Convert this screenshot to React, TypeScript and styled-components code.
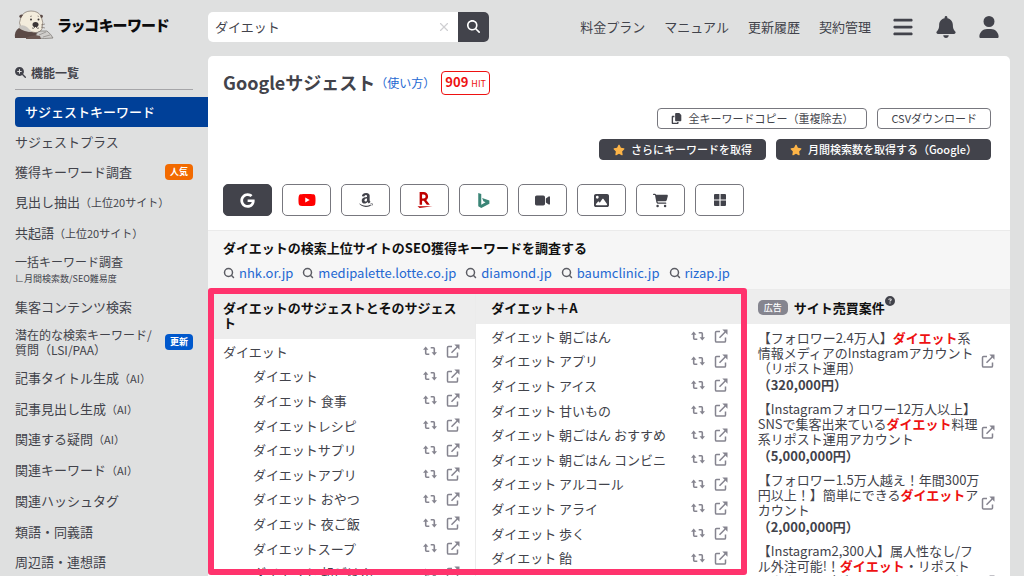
import React from "react";
import styled, { createGlobalStyle } from "styled-components";
import {
  FaAmazon,
  FaBars,
  FaBell,
  FaCartShopping,
  FaCircleQuestion,
  FaCopy,
  FaGoogle,
  FaImage,
  FaMagnifyingGlass,
  FaMagnifyingGlassPlus,
  FaStar,
  FaUser,
  FaVideo,
  FaYoutube,
} from "react-icons/fa6";
import { SiRakuten } from "react-icons/si";
import { Search, X } from "lucide-react";

const ink = "#42434b";
const muted = "#85848f";
const link = "#2468d2";
const red = "#ee1111";

const GlobalStyle = createGlobalStyle`
  * { box-sizing: border-box; }
  body {
    margin: 0;
    background: #dfe0e0;
    color: ${ink};
    font-family: "Noto Sans CJK JP", "Noto Sans", sans-serif;
    font-size: 13px;
    line-height: 15px;
  }
  a { color: inherit; text-decoration: none; }
  ul, h1, h2, p { margin: 0; padding: 0; list-style: none; }
  button, input { font: inherit; color: inherit; }
  button { cursor: pointer; }
`;

const Page = styled.div`
  display: grid;
  grid-template-columns: 208px minmax(0, 1fr);
  grid-template-rows: 56px minmax(0, 1fr);
  height: 100vh;
  overflow: hidden;
`;

const Brand = styled.a`
  display: flex;
  align-items: center;
  gap: 4px;
  padding-left: 14px;
  padding-bottom: 6px;
  color: #0c0c0e;
  font-size: 15px;
  font-weight: 900;
  line-height: 24px;
  white-space: nowrap;
  font-feature-settings: "palt";
`;

const TopBar = styled.header`
  display: flex;
  align-items: center;
  justify-content: space-between;
  padding: 0 24px 3px 0;
`;

const SearchForm = styled.form`
  display: flex;
  width: 281px;
  height: 30px;
  border-radius: 5px;
  overflow: hidden;
  background: #fff;
`;

const SearchInput = styled.input`
  flex: 1;
  min-width: 0;
  border: 0;
  outline: 0;
  padding: 0 7px;
  background: transparent;
`;

const ClearButton = styled.button`
  display: flex;
  align-items: center;
  border: 0;
  padding: 0 7px;
  background: transparent;
  color: #cfcfd2;
`;

const SearchButton = styled.button`
  display: flex;
  align-items: center;
  justify-content: center;
  width: 31px;
  border: 0;
  padding: 0;
  background: ${ink};
  color: #fff;
`;

const TopNav = styled.nav`
  display: flex;
  align-items: center;
  gap: 19px;
  white-space: nowrap;
`;

const IconGroup = styled.div`
  display: flex;
  align-items: center;
  gap: 21px;
  padding-left: 2px;
`;

const IconButton = styled.button`
  display: flex;
  border: 0;
  padding: 0;
  background: none;
`;

const Sidebar = styled.aside`
  display: flex;
  flex-direction: column;
  padding: 7px 0 4px 15px;
  min-height: 0;
`;

const SideTitle = styled.h2`
  display: flex;
  align-items: center;
  gap: 5px;
  height: 27px;
  margin-right: 15px;
  padding-bottom: 8px;
  border-bottom: 1px solid #a6a6a9;
  font-size: 12px;
  font-weight: 700;
`;

const ActiveLink = styled.a`
  flex: none;
  margin-top: 7px;
  padding: 0 10px;
  border-radius: 4px 0 0 4px;
  background: #004098;
  color: #fff;
  font-weight: 500;
  line-height: 30px;
`;

const SideList = styled.ul`
  flex: 1;
  display: flex;
  flex-direction: column;
  justify-content: space-between;
  margin-top: 4px;
  padding-right: 15px;
`;

const SideItem = styled.li`
  display: flex;
  align-items: center;
  justify-content: space-between;
  min-height: 20px;
  white-space: nowrap;
`;

const SideLink = styled.a<{ $compact?: boolean }>`
  font-size: ${(p) => (p.$compact ? 12 : 13)}px;
`;

const Small = styled.span`
  font-size: 11px;
`;

const SideNote = styled.span`
  display: block;
  padding-top: 2px;
  font-size: 9px;
`;

const Tag = styled.span<{ $color: string }>`
  padding: 0 5px;
  border-radius: 4px;
  background: ${(p) => p.$color};
  color: #fff;
  font-size: 9px;
  font-weight: 700;
  line-height: 16px;
`;

const Main = styled.main`
  display: flex;
  flex-direction: column;
  min-height: 0;
  margin-right: 14px;
  border-radius: 5px 5px 0 0;
  background: #fff;
`;

const TitleRow = styled.div`
  display: flex;
  align-items: center;
  padding: 13px 15px 1px;
`;

const Title = styled.h1`
  padding-bottom: 2px;
  font-size: 18px;
  font-weight: 700;
  line-height: 24px;
`;

const HelpLink = styled.a`
  color: ${link};
  font-size: 12px;
  line-height: 28px;
`;

const HitCount = styled.p`
  display: flex;
  align-items: baseline;
  gap: 3px;
  margin-left: 6px;
  padding: 0 3px;
  border: 1px solid ${red};
  border-radius: 4px;
  color: ${red};
  font-weight: 700;
  line-height: 20px;
`;

const HitUnit = styled.span`
  font-size: 9px;
  font-weight: 400;
`;

const Actions = styled.div`
  display: flex;
  justify-content: flex-end;
  gap: 10px;
  padding: 10px 19px 0 15px;
`;

const ActionButton = styled.button<{ $solid?: boolean }>`
  display: flex;
  align-items: center;
  gap: 6px;
  height: 21px;
  padding: 0 13px;
  border: 1px solid ${(p) => (p.$solid ? ink : "#77777e")};
  border-radius: 4px;
  background: ${(p) => (p.$solid ? ink : "#fff")};
  color: ${(p) => (p.$solid ? "#fff" : ink)};
  font-size: 11px;
  font-weight: ${(p) => (p.$solid ? 500 : 400)};
  white-space: nowrap;
`;

const Engines = styled.div`
  display: flex;
  gap: 10px;
  padding: 24px 15px 14px;
`;

const EngineButton = styled.button<{ $active?: boolean; $color?: string }>`
  display: flex;
  align-items: center;
  justify-content: center;
  width: 49px;
  height: 32px;
  padding: 0;
  border: 1px solid ${(p) => (p.$active ? ink : "#77777e")};
  border-radius: 5px;
  background: ${(p) => (p.$active ? ink : "#fff")};
  color: ${(p) => p.$color ?? ink};
`;

const Related = styled.section`
  padding: 9px 15px 9px;
  border: solid #ebebeb;
  border-width: 1px 0;
  background: #f6f6f6;
`;

const RelatedTitle = styled.h2`
  color: #111;
  font-size: 13px;
  font-weight: 700;
`;

const RelatedLinks = styled.ul`
  display: flex;
  flex-wrap: wrap;
  gap: 9px;
  padding-top: 10px;
`;

const RelatedLink = styled.a`
  display: flex;
  align-items: center;
  gap: 4px;
  color: ${link};

  svg { color: #5c5d64; }
`;

const Results = styled.div`
  flex: 1;
  display: grid;
  grid-template-columns: 2fr 1fr;
  min-height: 0;
`;

const Suggestions = styled.div`
  position: relative;
  display: grid;
  grid-template-columns: 1fr 1fr;
  min-height: 0;

  &::after {
    content: "";
    position: absolute;
    inset: -2px -4px 1px 0;
    border: 6px solid #ff336d;
    border-radius: 3px;
    pointer-events: none;
  }
`;

const Column = styled.section`
  min-width: 0;
  overflow: hidden;

  & + & { border-left: 1px solid #ebebeb; }
`;

const ColumnTitle = styled.h2`
  display: flex;
  align-items: center;
  gap: 6px;
  padding: 10px 15px 9px;
  background: #ededed;
  color: #111;
  font-size: 13px;
  font-weight: 700;
`;

const KeywordList = styled.ul`
  display: grid;
  grid-auto-rows: 1fr;
  min-height: 246px;
`;

const KeywordRow = styled.li<{ $nested?: boolean }>`
  display: flex;
  align-items: center;
  gap: 9px;
  padding: 0 15px 0 ${(p) => (p.$nested ? 45 : 15)}px;
  white-space: nowrap;
`;

const Keyword = styled.a`
  flex: 1;
`;

const RowIcon = styled.a`
  display: flex;
  color: ${muted};
`;

const AdLabel = styled.span`
  padding: 0 6px;
  border-radius: 5px;
  background: #85858f;
  color: #fff;
  font-size: 9px;
  font-weight: 500;
`;

const Help = styled.button`
  align-self: flex-start;
  display: flex;
  margin: -4px 0 0 -6px;
  border: 0;
  padding: 0;
  background: none;
  color: ${ink};
`;

const AdList = styled.ul`
  padding-top: 6px;
`;

const Ad = styled.li`
  display: flex;
  align-items: center;
  padding: 0 15px 9px;
`;

const AdText = styled.div`
  flex: 1;
  min-width: 0;
`;

const Hit = styled.strong`
  color: ${red};
  font-weight: 700;
`;

const Price = styled.p`
  padding-top: 2px;
  font-weight: 700;
`;

function OtterLogo() {
  return (
    <svg width="40" height="30" viewBox="0 0 40 30" aria-hidden="true">
      <path d="M1 28Q0 21 5 18L13 19L24 23L27 28Z" fill="#5b4a46" />
      <path d="M7 18Q4 13 7 7Q10 1 17 1Q24 1 27 6Q30 12 28 19Q25 24 18 22Q11 21 7 18Z" fill="#f3ecdc" stroke="#6d6259" strokeWidth=".6" />
      <path d="M5 16Q9 14 13 17Q16 20 18 22Q10 22 5 18Z" fill="#c9c6c1" />
      <path d="M7 8Q4 7 6 5Q8 4 9 5Z" fill="#5b4a46" />
      <path d="M26 5Q28 4 29 6Q29 8 27 8Z" fill="#5b4a46" />
      <path d="M22 26Q22 22 27 21L33 21Q37 24 39 28Q31 29 22 28Z" fill="#d0cecb" stroke="#77736f" strokeWidth=".7" />
      <path d="M25 25L32 22M29 27L36 25" stroke="#8b8784" strokeWidth=".7" />
      <path d="M12 28Q19 24 26 26L27 29H12Z" fill="#6b5852" />
      <ellipse cx="21.500" cy="14.500" rx="3" ry="2.600" fill="#3c3636" />
      <path d="M21 17Q20 19 18 18M22 17Q23 19 25 18" fill="none" stroke="#3c3636" strokeWidth=".7" />
      <circle cx="17" cy="9.500" r="1" fill="#3c3636" />
      <circle cx="24.500" cy="9.500" r="1" fill="#3c3636" />
      <path d="M16 6.500L18 6M23.500 6L25 6.500M27 15L31 14M27 17L31 18" stroke="#6d6259" strokeWidth=".6" />
    </svg>
  );
}

function SwapIcon() {
  return (
    <svg width="14" height="10" viewBox="0 0 14 10" fill="none" stroke="currentColor" aria-hidden="true">
      <path d="M2.700 3V7.300Q2.700 8.200 3.600 8.200H6.300M7.700 1.800H10.400Q11.300 1.800 11.300 2.700V7" strokeWidth="1.600" />
      <path d="M0 3.800L2.700 .6L5.400 3.800ZM8.600 6.200L11.300 9.400L14 6.200Z" fill="currentColor" stroke="none" />
    </svg>
  );
}

function OpenIcon() {
  return (
    <svg width="14" height="14" viewBox="0 0 14 14" fill="none" stroke="currentColor" aria-hidden="true">
      <path d="M6 2.500H2.600Q1.500 2.500 1.500 3.600V11.900Q1.500 13 2.600 13H10.400Q11.500 13 11.500 11.900V8.500M5.500 8.700L11.200 3" strokeWidth="1.500" />
      <path d="M8.300 .5H13.500V5.700Z" fill="currentColor" stroke="none" />
    </svg>
  );
}

function BingIcon() {
  return (
    <svg width="15" height="15" viewBox="0 0 24 24" fill="currentColor" aria-hidden="true">
      <path d="M3.600 0L8.400 1.700V18.600L15.200 14.700L11.800 13.100L9.800 7.900L21.400 11.900V17.100L8.400 24L3.600 21.300Z" />
    </svg>
  );
}

function GridIcon() {
  return (
    <svg width="12" height="12" viewBox="0 0 12 12" fill="currentColor" aria-hidden="true">
      <path d="M1 0H5.400V5.400H0V1Q0 0 1 0ZM6.600 0H11Q12 0 12 1V5.400H6.600ZM0 6.600H5.400V12H1Q0 12 0 11ZM6.600 6.600H12V11Q12 12 11 12H6.600Z" />
    </svg>
  );
}

type SideEntry = { label: string; suffix?: string; second?: string; note?: string; tag?: string; color?: string };

const sideEntries: SideEntry[] = [
  { label: "サジェストプラス" },
  { label: "獲得キーワード調査", tag: "人気", color: "#f26a00" },
  { label: "見出し抽出", suffix: "（上位20サイト）" },
  { label: "共起語", suffix: "（上位20サイト）" },
  { label: "一括キーワード調査", note: "∟月間検索数/SEO難易度" },
  { label: "集客コンテンツ検索" },
  { label: "潜在的な検索キーワード/", second: "質問（LSI/PAA）", tag: "更新", color: "#0058cc" },
  { label: "記事タイトル生成", suffix: "（AI）" },
  { label: "記事見出し生成", suffix: "（AI）" },
  { label: "関連する疑問", suffix: "（AI）" },
  { label: "関連キーワード", suffix: "（AI）" },
  { label: "関連ハッシュタグ" },
  { label: "類語・同義語" },
  { label: "周辺語・連想語" },
];

const engines = [
  { name: "Google", icon: <FaGoogle size={15} />, color: "#fff" },
  { name: "YouTube", icon: <FaYoutube size={18} />, color: "#f00" },
  { name: "Amazon", icon: <FaAmazon size={16} /> },
  { name: "楽天", icon: <SiRakuten size={16} />, color: "#bf0000" },
  { name: "Bing", icon: <BingIcon />, color: "#3b8577" },
  { name: "動画", icon: <FaVideo size={15} /> },
  { name: "画像", icon: <FaImage size={15} /> },
  { name: "ショッピング", icon: <FaCartShopping size={15} /> },
  { name: "すべて", icon: <GridIcon /> },
];

const columns = [
  {
    title: "ダイエットのサジェストとそのサジェスト",
    nested: true,
    words: ["ダイエット", "ダイエット", "ダイエット 食事", "ダイエットレシピ", "ダイエットサプリ", "ダイエットアプリ", "ダイエット おやつ", "ダイエット 夜ご飯", "ダイエットスープ", "ダイエット 朝ごはん"],
  },
  {
    title: "ダイエット＋A",
    nested: false,
    words: ["ダイエット 朝ごはん", "ダイエット アプリ", "ダイエット アイス", "ダイエット 甘いもの", "ダイエット 朝ごはん おすすめ", "ダイエット 朝ごはん コンビニ", "ダイエット アルコール", "ダイエット アライ", "ダイエット 歩く", "ダイエット 飴"],
  },
];

const ads = [
  { before: "【フォロワー2.4万人】", after: "系情報メディアのInstagramアカウント（リポスト運用）", price: "（320,000円）" },
  { before: "【Instagramフォロワー12万人以上】SNSで集客出来ている", after: "料理系リポスト運用アカウント", price: "（5,000,000円）" },
  { before: "【フォロワー1.5万人越え！年間300万円以上！】簡単にできる", after: "アカウント", price: "（2,000,000円）" },
  { before: "【Instagram2,300人】属人性なし/フル外注可能!！", after: "・リポストアカウント（ダイエット・ヘルスケアなど）", price: "（300,000円）" },
];

export default function App() {
  return (
    <Page>
      <GlobalStyle />
      <Brand href="#">
        <OtterLogo />
        ラッコキーワード
      </Brand>
      <TopBar>
        <SearchForm onSubmit={(e) => e.preventDefault()}>
          <SearchInput aria-label="キーワード" defaultValue="ダイエット" />
          <ClearButton type="reset" aria-label="クリア"><X size={14} strokeWidth={2} /></ClearButton>
          <SearchButton aria-label="検索"><FaMagnifyingGlass size={13} /></SearchButton>
        </SearchForm>
        <TopNav>
          <a href="#">料金プラン</a>
          <a href="#">マニュアル</a>
          <a href="#">更新履歴</a>
          <a href="#">契約管理</a>
          <IconGroup>
            <IconButton aria-label="メニュー"><FaBars size={22} /></IconButton>
            <IconButton aria-label="お知らせ"><FaBell size={22} /></IconButton>
            <IconButton aria-label="アカウント"><FaUser size={22} /></IconButton>
          </IconGroup>
        </TopNav>
      </TopBar>

      <Sidebar>
        <SideTitle><FaMagnifyingGlassPlus size={11} />機能一覧</SideTitle>
        <ActiveLink href="#">サジェストキーワード</ActiveLink>
        <SideList>
          {sideEntries.map((entry) => (
            <SideItem key={entry.label}>
              <SideLink href="#" $compact={Boolean(entry.note || entry.second)}>
                {entry.label}
                {entry.suffix && <Small>{entry.suffix}</Small>}
                {entry.second && <><br />{entry.second}</>}
                {entry.note && <SideNote>{entry.note}</SideNote>}
              </SideLink>
              {entry.tag && <Tag $color={entry.color ?? ink}>{entry.tag}</Tag>}
            </SideItem>
          ))}
        </SideList>
      </Sidebar>

      <Main>
        <TitleRow>
          <Title>Googleサジェスト</Title>
          <HelpLink href="#">（使い方）</HelpLink>
          <HitCount>909<HitUnit>HIT</HitUnit></HitCount>
        </TitleRow>
        <Actions>
          <ActionButton><FaCopy size={11} />全キーワードコピー（重複除去）</ActionButton>
          <ActionButton>CSVダウンロード</ActionButton>
        </Actions>
        <Actions>
          <ActionButton $solid><FaStar size={12} color="#fdb447" />さらにキーワードを取得</ActionButton>
          <ActionButton $solid><FaStar size={12} color="#fdb447" />月間検索数を取得する（Google）</ActionButton>
        </Actions>
        <Engines>
          {engines.map((engine, i) => (
            <EngineButton key={engine.name} aria-label={engine.name} $active={i === 0} $color={engine.color}>
              {engine.icon}
            </EngineButton>
          ))}
        </Engines>
        <Related>
          <RelatedTitle>ダイエットの検索上位サイトのSEO獲得キーワードを調査する</RelatedTitle>
          <RelatedLinks>
            {["nhk.or.jp", "medipalette.lotte.co.jp", "diamond.jp", "baumclinic.jp", "rizap.jp"].map((site) => (
              <li key={site}>
                <RelatedLink href="#"><Search size={12} strokeWidth={3} />{site}</RelatedLink>
              </li>
            ))}
          </RelatedLinks>
        </Related>
        <Results>
          <Suggestions>
            {columns.map((column) => (
              <Column key={column.title}>
                <ColumnTitle>{column.title}</ColumnTitle>
                <KeywordList>
                  {column.words.map((word, i) => (
                    <KeywordRow key={i} $nested={column.nested && i > 0}>
                      <Keyword href="#">{word}</Keyword>
                      <RowIcon href="#" aria-label="再検索"><SwapIcon /></RowIcon>
                      <RowIcon href="#" aria-label="Googleで開く"><OpenIcon /></RowIcon>
                    </KeywordRow>
                  ))}
                </KeywordList>
              </Column>
            ))}
          </Suggestions>
          <Column>
            <ColumnTitle>
              <AdLabel>広告</AdLabel>
              サイト売買案件
              <Help aria-label="ヘルプ"><FaCircleQuestion size={10} /></Help>
            </ColumnTitle>
            <AdList>
              {ads.map((ad) => (
                <Ad key={ad.before}>
                  <AdText>
                    <a href="#">{ad.before}<Hit>ダイエット</Hit>{ad.after}</a>
                    <Price>{ad.price}</Price>
                  </AdText>
                  <RowIcon href="#" aria-label="案件を開く"><OpenIcon /></RowIcon>
                </Ad>
              ))}
            </AdList>
          </Column>
        </Results>
      </Main>
    </Page>
  );
}
